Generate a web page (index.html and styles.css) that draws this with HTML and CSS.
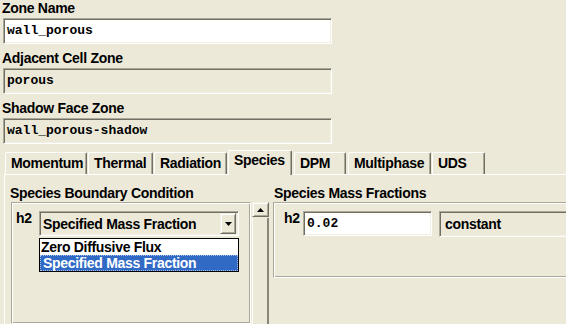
FILE: index.html
```html
<!DOCTYPE html>
<html>
<head>
<meta charset="utf-8">
<link rel="stylesheet" href="styles.css">
</head>
<body>
<div class="dialog">
  <div class="top">
    <div class="fgroup">
      <div class="label">Zone Name</div>
      <div class="field white">wall_porous</div>
    </div>
    <div class="fgroup">
      <div class="label">Adjacent Cell Zone</div>
      <div class="field">porous</div>
    </div>
    <div class="fgroup">
      <div class="label">Shadow Face Zone</div>
      <div class="field">wall_porous-shadow</div>
    </div>
  </div>

  <div class="tabs">
    <div class="tab t-mom">Momentum</div>
    <div class="tab t-th">Thermal</div>
    <div class="tab t-rad">Radiation</div>
    <div class="tab t-sp active">Species</div>
    <div class="tab t-dpm">DPM</div>
    <div class="tab t-mp">Multiphase</div>
    <div class="tab t-uds">UDS</div>
  </div>

  <div class="panel">
    <div class="col left">
      <div class="label">Species Boundary Condition</div>
      <div class="group lgroup">
        <div class="row">
          <span class="sp">h2</span>
          <div class="combo">
            <span class="combo-text">Specified Mass Fraction</span>
            <div class="dropbtn"><svg width="7" height="4" viewBox="0 0 7 4"><path d="M0 0H7L3.5 4Z" fill="#000"/></svg></div>
            <div class="dropdown">
              <div class="item">Zero Diffusive Flux</div>
              <div class="item sel">Specified Mass Fraction</div>
            </div>
          </div>
        </div>
      </div>
    </div>
    <div class="scrollbar">
      <div class="sbtn"><svg width="7" height="4" viewBox="0 0 7 4"><path d="M0 4H7L3.5 0Z" fill="#000"/></svg></div>
      <div class="track"></div>
    </div>
    <div class="col right">
      <div class="label rlabel">Species Mass Fractions</div>
      <div class="group rgroup">
        <div class="row">
          <span class="sp rsp">h2</span>
          <div class="field white val">0.02</div>
          <div class="field prof">constant</div>
        </div>
      </div>
    </div>
  </div>
</div>
</body>
</html>
```

FILE: styles.css
```css
html, body {
  margin: 0;
  padding: 0;
  background: #ece9d8;
  overflow: hidden;
}
body {
  width: 566px;
  height: 324px;
  font-family: "Liberation Sans", Arial, sans-serif;
  font-weight: bold;
  font-size: 14px;
  letter-spacing: -0.3px;
  color: #000;
}
.dialog {
  display: flex;
  flex-direction: column;
  height: 324px;
}
.top {
  padding-left: 2px;
}
.fgroup {
  margin-bottom: 6px;
}
.label {
  line-height: 16px;
  height: 16px;
  white-space: nowrap;
}
.field {
  box-sizing: border-box;
  height: 26px;
  margin-top: 2px;
  margin-left: 1px;
  width: 329px;
  border-top: 1px solid #aca899;
  border-left: 1px solid #aca899;
  border-bottom: 1px solid #ffffff;
  border-right: 1px solid #ffffff;
  box-shadow: inset 1px 1px 0 #716f64, inset -1px -1px 0 #f1efe2;
  padding-left: 3px;
  font-family: "Liberation Mono", "Courier New", monospace;
  font-weight: bold;
  font-size: 13px;
  letter-spacing: 0;
  line-height: 24px;
  white-space: nowrap;
  overflow: hidden;
}
.field.white {
  background: #ffffff;
}

/* tabs */
.tabs {
  display: flex;
  align-items: flex-end;
  height: 24px;
  padding-left: 5px;
  gap: 1px;
  position: relative;
  z-index: 2;
}
.tab {
  box-sizing: border-box;
  flex-shrink: 0;
  height: 22px;
  border-top: 1px solid #ffffff;
  border-left: 1px solid #ffffff;
  border-right: 1px solid #716f64;
  box-shadow: inset -1px 0 0 #aca899;
  border-top-left-radius: 2px;
  border-top-right-radius: 2px;
  padding-left: 5px;
  line-height: 20px;
  white-space: nowrap;
}
.tab.active {
  height: 25px;
  margin-bottom: -1px;
  background: #ece9d8;
  line-height: 19px;
}
.t-mom { width: 82px; }
.t-th { width: 65px; }
.t-rad { width: 73px; }
.t-sp { width: 64px; }
.t-dpm { width: 52px; margin-left: 1px; }
.t-mp { width: 83px; margin-left: 1px; }
.t-uds { width: 53px; }

/* panel */
.panel {
  flex: 1;
  margin-left: 4px;
  border-top: 1px solid #ffffff;
  border-left: 1px solid #ffffff;
  padding-top: 10px;
  padding-left: 5px;
  display: flex;
  align-items: stretch;
  min-height: 0;
}
.col {
  display: flex;
  flex-direction: column;
}
.col.left {
  width: 241px;
  flex-shrink: 0;
}
.group {
  box-sizing: border-box;
  border-top: 1px solid #aca899;
  border-left: 1px solid #aca899;
  border-right: 1px solid #ffffff;
  border-bottom: 1px solid #ffffff;
  box-shadow: inset 1px 1px 0 #ffffff, inset -1px -1px 0 #aca899;
  margin-top: 1px;
}
.lgroup {
  margin-left: 1px;
  flex: 1;
  padding: 8px 0 0 4px;
}
.row {
  display: flex;
  align-items: flex-start;
}
.sp {
  line-height: 14px;
  width: 23px;
  flex-shrink: 0;
}
.combo {
  position: relative;
  flex-shrink: 0;
  box-sizing: border-box;
  width: 200px;
  height: 25px;
  border-top: 1px solid #aca899;
  border-left: 1px solid #aca899;
  border-bottom: 1px solid #ffffff;
  border-right: 1px solid #ffffff;
  box-shadow: inset 1px 1px 0 #716f64, inset -1px -1px 0 #f1efe2;
  display: flex;
  align-items: center;
  padding: 2px 2px 2px 3px;
}
.combo-text {
  flex: 1;
  white-space: nowrap;
  line-height: 16px;
  padding-top: 1px;
}
.dropbtn {
  box-sizing: border-box;
  width: 16px;
  height: 21px;
  flex-shrink: 0;
  border-top: 1px solid #f1efe2;
  border-left: 1px solid #f1efe2;
  border-right: 1px solid #716f64;
  border-bottom: 1px solid #716f64;
  box-shadow: inset 1px 1px 0 #ffffff, inset -1px -1px 0 #aca899;
  display: flex;
  align-items: center;
  justify-content: center;
}
.dropdown {
  position: absolute;
  left: -1px;
  top: 26px;
  width: 200px;
  box-sizing: border-box;
  border: 1px solid #000;
  background: #fff;
  z-index: 5;
}
.item {
  height: 16px;
  line-height: 16px;
  padding-left: 1px;
  white-space: nowrap;
  box-sizing: border-box;
}
.item.sel {
  background: #316ac5;
  color: #fff;
  border: 1px dotted #a8c0e8;
  line-height: 14px;
  padding-left: 2px;
}

/* scrollbar */
.scrollbar {
  width: 17px;
  flex-shrink: 0;
  margin-left: 1px;
  margin-top: 17px;
  display: flex;
  flex-direction: column;
}
.sbtn {
  box-sizing: border-box;
  height: 15px;
  border-top: 1px solid #f1efe2;
  border-left: 1px solid #f1efe2;
  border-right: 1px solid #716f64;
  border-bottom: 1px solid #716f64;
  box-shadow: inset 1px 1px 0 #ffffff, inset -1px -1px 0 #aca899;
  display: flex;
  align-items: center;
  justify-content: center;
}
.track {
  flex: 1;
  border-left: 1px solid #ffffff;
  border-right: 2px solid #8a877a;
  margin-top: 1px;
}

/* right column */
.col.right {
  margin-left: 4px;
  flex: 1;
  min-width: 0;
}
.rlabel {
  padding-left: 1px;
}
.rgroup {
  height: 76px;
  width: 320px;
  padding: 8px 0 0 10px;
}
.rsp {
  width: 19px;
}
.field.val {
  flex-shrink: 0;
  width: 129px;
  height: 25px;
  margin: 0;
  padding-left: 3px;
}
.field.prof {
  flex-shrink: 0;
  width: 140px;
  height: 26px;
  margin: 0 0 0 7px;
  padding-left: 5px;
  font-family: "Liberation Sans", Arial, sans-serif;
  font-weight: bold;
  font-size: 14px;
  letter-spacing: -0.3px;
}
```
